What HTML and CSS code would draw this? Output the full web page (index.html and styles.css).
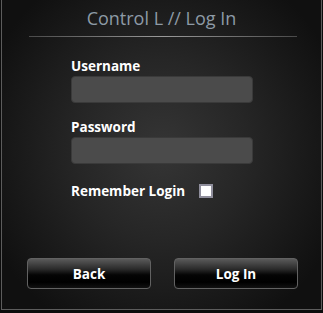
FILE: index.html
```html
<!DOCTYPE html>
<html>
<head>
<meta charset="utf-8">
<link rel="stylesheet" href="styles.css">
</head>
<body>
<div class="frame">
  <h1 class="title">Control L // Log In</h1>
  <div class="rule"></div>
  <form class="form">
    <label class="label">Username</label>
    <div class="input"></div>
    <label class="label label-gap">Password</label>
    <div class="input"></div>
    <div class="remember">
      <span class="label">Remember Login</span>
      <span class="check"></span>
    </div>
  </form>
  <div class="buttons">
    <button class="btn" type="button">Back</button>
    <button class="btn" type="button">Log In</button>
  </div>
</div>
</body>
</html>
```
FILE: styles.css
```css
html, body {
  margin: 0;
  padding: 0;
  background: #0c0c0c;
}
body {
  width: 323px;
  height: 313px;
  overflow: hidden;
  font-family: "Open Sans", "DejaVu Sans", sans-serif;
}
.frame {
  box-sizing: border-box;
  margin-left: 1px;
  width: 321px;
  height: 310px;
  border: 1px solid #5c5c5c;
  border-top: none;
  background: radial-gradient(ellipse 190px 200px at 160px 150px, #353535 0%, #262626 45%, #101010 100%);
  display: flex;
  flex-direction: column;
}
.title {
  margin: 0;
  padding-top: 6px;
  height: 24px;
  font-size: 18px;
  line-height: 24px;
  font-weight: 400;
  color: #8d9aa6;
  text-align: center;
}
.rule {
  margin: 6px 0 0 27px;
  width: 268px;
  height: 1px;
  background: linear-gradient(to right, #4a4a4a, #9a9a9a 50%, #4a4a4a);
}
.form {
  margin: 20px 0 0 69px;
  display: flex;
  flex-direction: column;
  align-items: flex-start;
}
.label {
  font-size: 13.5px;
  font-weight: 700;
  line-height: 18px;
  color: #ffffff;
}
.label-gap {
  margin-top: 15px;
}
.input {
  box-sizing: border-box;
  margin-top: 1px;
  width: 182px;
  height: 27px;
  border: 1px solid #3a3a3a;
  border-radius: 4px;
  background: #4b4b4b;
}
.remember {
  margin-top: 18px;
  display: flex;
  align-items: center;
  gap: 14px;
}
.check {
  box-sizing: border-box;
  width: 14px;
  height: 14px;
  background: #ffffff;
  border: 2px solid #8f8e9c;
}
.buttons {
  margin: 58px 0 0 25px;
  display: flex;
  gap: 23px;
}
.btn {
  box-sizing: border-box;
  width: 124px;
  height: 31px;
  border: 1px solid #626262;
  border-radius: 4px;
  background: linear-gradient(to bottom, #5a5a5a 0%, #2a2a2a 35%, #050505 55%, #000000 80%, #111111 100%);
  color: #ffffff;
  font-family: "Open Sans", "DejaVu Sans", sans-serif;
  font-size: 13.5px;
  font-weight: 700;
  padding: 0;
}
```
